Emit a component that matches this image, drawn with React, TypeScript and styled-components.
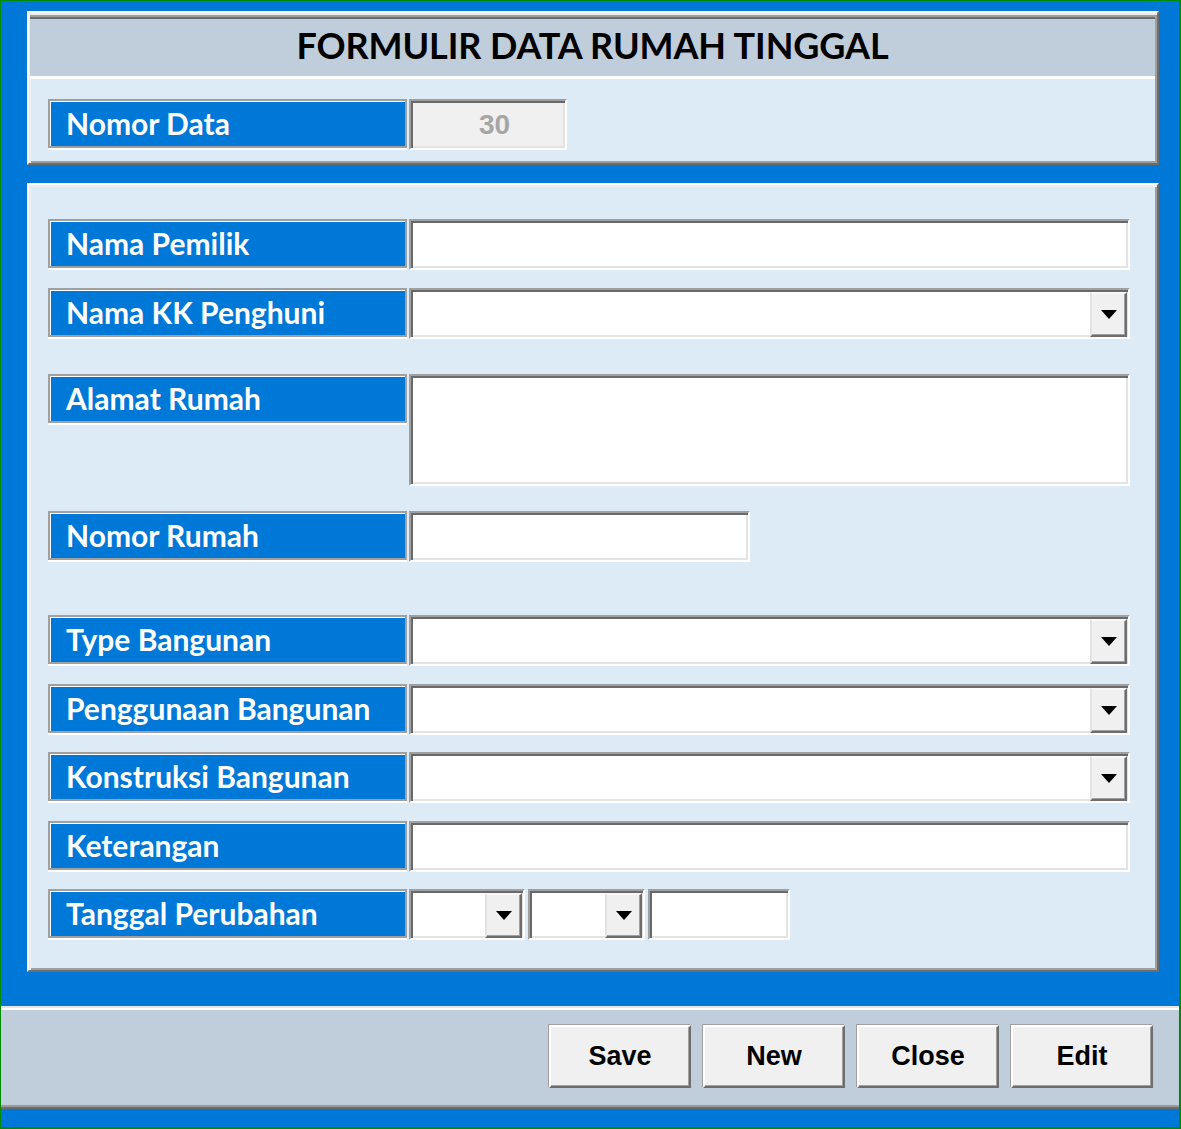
import React from 'react';
import styled, { createGlobalStyle } from 'styled-components';

const GlobalStyle = createGlobalStyle`
html, body {
  margin: 0;
  padding: 0;
  background: #0078d7;
}
* {
  box-sizing: border-box;
}
`

const Frame = styled.div`
width: 1181px;
height: 1129px;
border-style: solid;
border-color: #008a00;
border-width: 1px 2px 2px 1px;
background: #0078d7;
display: flex;
flex-direction: column;
padding-top: 10px;
font-family: "Lato", "Open Sans", sans-serif;
`

const Panels = styled.div`
display: flex;
flex-direction: column;
gap: 18px;
padding: 0 20px 0 26px;
`

const Panel = styled.section<{ $height: number }>`
height: ${p => p.$height}px;
background: #ddebf7;
border-style: solid;
border-width: 2px;
border-color: #ffffff #6d6d6d #6d6d6d #ffffff;
box-shadow: inset 2px 2px 0 #eeeeee, inset -2px -2px 0 #a0a0a0;
display: flex;
flex-direction: column;
`

const TitleBand = styled.div`
margin: 2px 2px 0 1px;
height: 64px;
background: #c0cddb;
border-top: 2px solid #a0a0a0;
border-bottom: 3px solid #ffffff;
box-shadow: inset 0 2px 0 #6d6d6d;
display: flex;
align-items: center;
justify-content: center;
padding-bottom: 3px;
`

const Title = styled.h1`
margin: 0;
font-size: 36px;
font-weight: 700;
color: #000;
letter-spacing: -0.1px;
`

const PanelBody = styled.div<{ $top: number }>`
display: flex;
flex-direction: column;
padding: ${p => p.$top}px 27px 0 19px;
`

const Row = styled.div<{ $space?: number }>`
display: flex;
align-items: flex-start;
gap: 2px;
margin-top: ${p => p.$space ?? 0}px;
`

const Label = styled.div`
width: 359px;
height: 49px;
flex-shrink: 0;
background: #0078d7;
border: 2px solid #a0a0a0;
box-shadow: inset 1px 1px 0 #ffffff, 0 2px 0 #ffffff;
color: #ffffff;
font-size: 30px;
font-weight: 700;
display: flex;
align-items: center;
padding-left: 16px;
padding-bottom: 2px;
white-space: nowrap;
`

const Field = styled.div<{ $width?: number; $height?: number; $bg?: string }>`
${p => (p.$width ? `width: ${p.$width}px;` : 'flex: 1;')}
height: ${p => p.$height ?? 51}px;
background: ${p => p.$bg ?? '#ffffff'};
border-style: solid;
border-width: 2px;
border-color: #a0a0a0 #ffffff #ffffff #a0a0a0;
box-shadow: inset 2px 2px 0 #696969, inset -2px -2px 0 #e3e3e3;
display: flex;
align-items: center;
justify-content: flex-end;
padding-right: 1px;
`

const Value = styled.span`
flex: 1;
text-align: center;
padding-left: 14px;
font-family: "Liberation Sans", Arial, sans-serif;
font-weight: 700;
font-size: 28px;
color: #a6a6a6;
`

const DropButton = styled.div`
width: 37px;
height: 45px;
margin-top: 1px;
background: #f0f0f0;
border-style: solid;
border-width: 2px;
border-color: #f8f8f8 #6d6d6d #6d6d6d #e3e3e3;
box-shadow: inset -1px -1px 0 #a0a0a0;
display: flex;
align-items: center;
justify-content: center;
`

const Arrow = styled.span`
width: 0;
height: 0;
border-left: 8px solid transparent;
border-right: 8px solid transparent;
border-top: 9px solid #000;
margin-left: 1px;
`

const DateGroup = styled.div`
display: flex;
gap: 3px;
`

const BottomBar = styled.footer`
margin-top: 34px;
height: 103px;
background: #c0cddb;
border-top: 2px solid #e6e6e6;
border-bottom: 2px solid #6d6d6d;
box-shadow: inset 0 2px 0 #ffffff, inset 0 -2px 0 #9a9a9a;
display: flex;
align-items: center;
justify-content: flex-end;
gap: 12px;
padding: 0 26px 2px 0;
`

const Button = styled.button`
width: 142px;
height: 63px;
background: #f0f0f0;
border-style: solid;
border-width: 2px;
border-color: #ffffff #6d6d6d #6d6d6d #ffffff;
box-shadow: inset -1px -1px 0 #a0a0a0, -1px -1px 0 #a0a0a0;
font-family: "Liberation Sans", Arial, sans-serif;
font-weight: 700;
font-size: 27px;
color: #000;
padding: 0;
cursor: pointer;
`

function Combo({ width }: { width?: number }) {
  return (
    <Field $width={width}>
      <DropButton>
        <Arrow />
      </DropButton>
    </Field>
  );
}

function App() {
  return (
    <Frame>
      <GlobalStyle />
      <Panels>
        <Panel $height={154}>
          <TitleBand>
            <Title>FORMULIR DATA RUMAH TINGGAL</Title>
          </TitleBand>
          <PanelBody $top={20}>
            <Row>
              <Label>Nomor Data</Label>
              <Field $width={158} $bg="#f0f0f0">
                <Value>30</Value>
              </Field>
            </Row>
          </PanelBody>
        </Panel>

        <Panel $height={789}>
          <PanelBody $top={34}>
            <Row>
              <Label>Nama Pemilik</Label>
              <Field />
            </Row>
            <Row $space={18}>
              <Label>Nama KK Penghuni</Label>
              <Combo />
            </Row>
            <Row $space={35}>
              <Label>Alamat Rumah</Label>
              <Field $height={112} />
            </Row>
            <Row $space={25}>
              <Label>Nomor Rumah</Label>
              <Field $width={341} />
            </Row>
            <Row $space={53}>
              <Label>Type Bangunan</Label>
              <Combo />
            </Row>
            <Row $space={18}>
              <Label>Penggunaan Bangunan</Label>
              <Combo />
            </Row>
            <Row $space={17}>
              <Label>Konstruksi Bangunan</Label>
              <Combo />
            </Row>
            <Row $space={18}>
              <Label>Keterangan</Label>
              <Field />
            </Row>
            <Row $space={17}>
              <Label>Tanggal Perubahan</Label>
              <DateGroup>
                <Combo width={116} />
                <Combo width={117} />
                <Field $width={142} />
              </DateGroup>
            </Row>
          </PanelBody>
        </Panel>
      </Panels>

      <BottomBar>
        <Button>Save</Button>
        <Button>New</Button>
        <Button>Close</Button>
        <Button>Edit</Button>
      </BottomBar>
    </Frame>
  );
}

export default App;
